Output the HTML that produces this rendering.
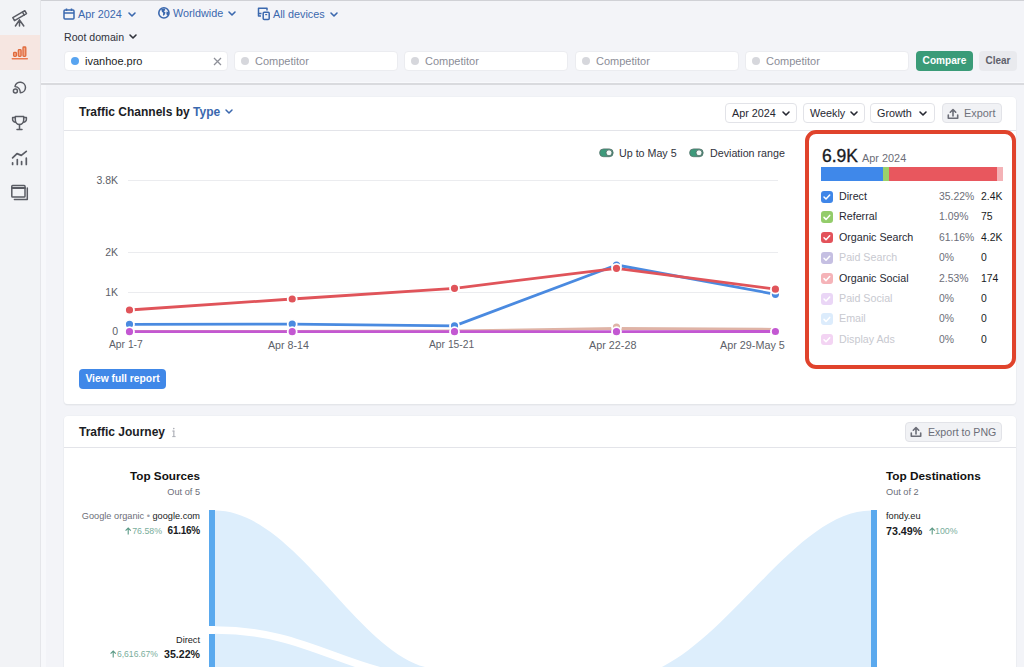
<!DOCTYPE html>
<html><head><meta charset="utf-8">
<style>
*{box-sizing:border-box;margin:0;padding:0}
html,body{width:1024px;height:667px;overflow:hidden}
body{background:#f3f4f8;font-family:"Liberation Sans",sans-serif;color:#1b1d25;position:relative}
.a{position:absolute;white-space:nowrap}
svg{position:absolute;overflow:visible}
#topline{left:0;top:0;width:1024px;height:1.2px;background:#d0d1d6}
#side{left:0;top:0;width:41px;height:667px;background:#f2f3f6;border-right:1px solid #e5e6ea}
#side .act{position:absolute;left:0;top:35px;width:40px;height:35px;background:#f6e6e1}
#hdrline{left:41px;top:83.3px;width:983px;height:2.2px;background:#d9dade;box-shadow:0 -1px 0 #f8f9fc}
.blue{color:#3b68ae}
.hd{font-size:10.8px;top:7px;line-height:14px}
.inp{top:51px;height:20px;width:164px;background:#fff;border:1px solid #ebecf0;border-radius:4px}
.inp .dot{position:absolute;left:6px;top:4.6px;width:8.4px;height:8.4px;border-radius:50%;background:#d6d7dc}
.inp .t{position:absolute;left:20px;top:2px;font-size:11px;line-height:14px;color:#8b8d97}
.card{background:#fff;border-radius:4px;box-shadow:0 0 0 0.5px #eceef2,0 1px 1.5px rgba(20,22,30,0.12)}
.btn{top:103px;height:20px;border:1px solid #e2e3e8;border-radius:4px;background:#fff;font-size:10.8px;line-height:18px;color:#262832}
.lg{font-size:10.7px;line-height:13px;color:#30323b;margin-top:0.7px}
.yl{font-size:10.5px;line-height:12px;color:#5d5f69;text-align:right;width:40px}
.xl{font-size:10.8px;line-height:12px;color:#5d5f69}
.row{position:absolute;left:821px;height:12px}
.cb{position:absolute;left:0;top:0;width:11.5px;height:11.5px;border-radius:3px}
.cb svg{left:0;top:0}
.rn{position:absolute;left:18px;top:-1px;font-size:10.7px;line-height:13px;color:#262832;white-space:nowrap}
.rp{position:absolute;left:118px;top:-1px;font-size:10.4px;line-height:13px;color:#6c6e78;white-space:nowrap}
.rv{position:absolute;left:160px;top:-1px;font-size:10.4px;line-height:13px;color:#191b23;white-space:nowrap}
.dim .rn{color:#c8c9d0}
</style></head><body>
<div class="a" id="topline"></div>
<div class="a" id="side"><div class="act"></div></div>
<div class="a" id="hdrline"></div>
<div class="a" style="left:41px;top:85px;width:5px;height:582px;background:#f7f8fb"></div>

<!-- sidebar icons -->
<svg width="41" height="210" style="left:0;top:0" fill="none" stroke="#5a5c64" stroke-width="1.5" stroke-linecap="round" stroke-linejoin="round">
  <path d="M12.8 17.6 L24.8 10.7 L26.5 13.7 L14.5 20.6 Z"/>
  <path d="M22.5 12.1 L24.2 15.1"/>
  <path d="M19.5 20 L15.4 26 M19.5 20 L19.5 26 M19.5 20 L23.8 26"/>
  <g stroke="#e06a3c" stroke-width="1.3" fill="#f2a888">
    <rect x="13.6" y="52.4" width="2.8" height="3.9" rx="0.8"/>
    <rect x="18.3" y="49.6" width="2.8" height="6.7" rx="0.8"/>
    <rect x="23.0" y="47.0" width="2.8" height="9.3" rx="0.8"/>
    <path d="M12.3 58.7 H27.3" stroke="#ea7a50" stroke-width="1.5"/>
  </g>
  <circle cx="15.4" cy="91.1" r="2"/>
  <path d="M15 86.4 A5.3 5.3 0 1 1 20.3 92.8 A6.2 6.2 0 0 0 15 86.4 Z"/>
  <path d="M15.3 116.6 H23.7 V120 A4.2 4.4 0 0 1 15.3 120 Z"/>
  <path d="M15.2 117.6 H12.6 V119 A3 3 0 0 0 15.6 122.3 M23.8 117.6 H26.4 V119 A3 3 0 0 1 23.4 122.3"/>
  <path d="M19.5 124.6 V129.3 M17 129.5 H22"/>
  <path d="M12.6 157.8 L17 153.6 L21.3 155.4 L26.3 151.3" stroke-width="1.7"/>
  <path d="M12.6 162.8 V164.4 M17.3 159.6 V164.4 M21.6 161.6 V164.4 M26.3 158.2 V164.4" stroke-width="1.7"/>
  <rect x="11.8" y="185.4" width="13.2" height="11.6" rx="0.8"/>
  <path d="M12 187.9 H25" stroke-width="2"/>
  <path d="M14.4 199.4 H27.3 V188"/>
</svg>

<!-- header selectors -->
<svg width="12" height="12" style="left:63px;top:8px" fill="none" stroke="#3b68ae" stroke-width="1.5"><rect x="1" y="2" width="10" height="9" rx="1"/><path d="M1 5 H11 M3.5 0.5 V3 M8.5 0.5 V3"/></svg>
<div class="a hd blue" style="left:78px">Apr 2024</div>
<svg width="8" height="6" style="left:128px;top:12px" fill="none" stroke="#3b68ae" stroke-width="1.6" stroke-linecap="round" stroke-linejoin="round"><path d="M1 1 L4 4 L7 1"/></svg>

<svg width="14" height="14" style="left:157px;top:6px"><circle cx="6.9" cy="6.9" r="5.1" fill="none" stroke="#3b68ae" stroke-width="1.6"/><path d="M4.2 3 L7.6 2.6 L8.4 3.9 L6.9 5.2 L8.6 6.5 L7.8 8.4 L6.5 10 L5.9 8.2 L6.3 6.9 L4.9 5.8 Z" fill="#3b68ae"/><path d="M9.6 5.6 L11.8 6.2 L11.5 8.6 L10 9.6 L9.3 7.6 Z" fill="#3b68ae"/></svg>
<div class="a hd blue" style="left:173px;top:6px">Worldwide</div>
<svg width="8" height="6" style="left:228px;top:11px" fill="none" stroke="#3b68ae" stroke-width="1.6" stroke-linecap="round" stroke-linejoin="round"><path d="M1 1 L4 4 L7 1"/></svg>

<svg width="14" height="14" style="left:257px;top:7px" fill="none" stroke="#3b68ae" stroke-width="1.5" stroke-linejoin="round"><path d="M4.5 6.5 H1.5 V1.2 H10 V3.5"/><path d="M1.5 6.5 V9 H4"/><rect x="6.2" y="5.2" width="6" height="7.2" rx="1"/><path d="M8.2 7.6 H10.2" stroke-width="1.2"/></svg>
<div class="a hd blue" style="left:273px">All devices</div>
<svg width="8" height="6" style="left:330px;top:12px" fill="none" stroke="#3b68ae" stroke-width="1.6" stroke-linecap="round" stroke-linejoin="round"><path d="M1 1 L4 4 L7 1"/></svg>

<div class="a hd" style="left:64px;top:30px;color:#30323b;font-size:10.6px">Root domain</div>
<svg width="8" height="6" style="left:129px;top:34px" fill="none" stroke="#30323b" stroke-width="1.6" stroke-linecap="round" stroke-linejoin="round"><path d="M1 1 L4 4 L7 1"/></svg>

<div class="a inp" style="left:64px"><div class="dot" style="background:#58a4f0"></div><div class="t" style="color:#1b1d25">ivanhoe.pro</div>
  <svg width="10" height="10" style="left:148px;top:5px" fill="none" stroke="#8e9099" stroke-width="1.3"><path d="M1 1 L8 8 M8 1 L1 8"/></svg></div>
<div class="a inp" style="left:234px"><div class="dot"></div><div class="t">Competitor</div></div>
<div class="a inp" style="left:404px"><div class="dot"></div><div class="t">Competitor</div></div>
<div class="a inp" style="left:575px"><div class="dot"></div><div class="t">Competitor</div></div>
<div class="a inp" style="left:745px"><div class="dot"></div><div class="t">Competitor</div></div>
<div class="a" style="left:916px;top:51px;width:57px;height:20px;background:#3a9b78;border-radius:4px;color:#fff;font-size:10.1px;font-weight:bold;line-height:20px;text-align:center">Compare</div>
<div class="a" style="left:979px;top:51px;width:38px;height:20px;background:#e9eaee;border-radius:4px;color:#5f616b;font-size:10px;font-weight:bold;line-height:20px;text-align:center">Clear</div>

<!-- card 1 -->
<div class="a card" style="left:64px;top:97px;width:952px;height:307px"></div>
<div class="a" style="left:64px;top:130px;width:952px;height:1px;background:#e3e4e9"></div>
<div class="a" style="left:79px;top:104px;font-size:12px;font-weight:bold;line-height:16px">Traffic Channels by <span class="blue">Type</span></div>
<svg width="8" height="6" style="left:225px;top:109px" fill="none" stroke="#3b68ae" stroke-width="1.5" stroke-linecap="round" stroke-linejoin="round"><path d="M1 1 L4 4 L7 1"/></svg>

<div class="a btn" style="left:725px;width:72px;padding-left:6px">Apr 2024</div>
<svg width="8" height="6" style="left:782px;top:111px" fill="none" stroke="#262832" stroke-width="1.6" stroke-linecap="round" stroke-linejoin="round"><path d="M1 1 L4 4 L7 1"/></svg>
<div class="a btn" style="left:803px;width:62px;padding-left:6px">Weekly</div>
<svg width="8" height="6" style="left:850px;top:111px" fill="none" stroke="#262832" stroke-width="1.6" stroke-linecap="round" stroke-linejoin="round"><path d="M1 1 L4 4 L7 1"/></svg>
<div class="a btn" style="left:870px;width:65px;padding-left:6px">Growth</div>
<svg width="8" height="6" style="left:919px;top:111px" fill="none" stroke="#262832" stroke-width="1.6" stroke-linecap="round" stroke-linejoin="round"><path d="M1 1 L4 4 L7 1"/></svg>
<div class="a btn" style="left:942px;width:60px;padding-left:21px;background:#f1f2f5;color:#70727c;font-size:10.9px">Export</div>
<svg width="12" height="12" style="left:946.5px;top:107.5px" fill="none" stroke="#6c6e78" stroke-width="1.6" stroke-linecap="round" stroke-linejoin="round"><path d="M6 8 V1.8 M3.3 4.2 L6 1.5 L8.7 4.2 M1.3 7 V10.2 H10.7 V7"/></svg>

<!-- toggles -->
<svg width="16" height="10" style="left:598.7px;top:148px"><rect x="0.6" y="0.9" width="13.6" height="7.8" rx="3.9" fill="#3d9a7b" stroke="#56706a" stroke-width="0.8"/><circle cx="10" cy="4.8" r="3" fill="#f2fbf8" stroke="#56706a" stroke-width="0.9"/></svg>
<div class="a lg" style="left:619px;top:146px">Up to May 5</div>
<svg width="16" height="10" style="left:689px;top:148px"><rect x="0.6" y="0.9" width="13.6" height="7.8" rx="3.9" fill="#3d9a7b" stroke="#56706a" stroke-width="0.8"/><circle cx="10" cy="4.8" r="3" fill="#f2fbf8" stroke="#56706a" stroke-width="0.9"/></svg>
<div class="a lg" style="left:710px;top:146px">Deviation range</div>

<!-- chart -->
<svg width="1024" height="400" style="left:0;top:0">
  <g stroke="#ebecef" stroke-width="1">
    <path d="M128 180.5 H778 M128 252.5 H778 M128 292.5 H778 M128 331.5 H778"/>
  </g>
  <g fill="none" stroke-width="2.8" stroke-linejoin="round">
    <polyline stroke="#4a8ae0" points="129.5,324.3 292.2,324.1 454.5,325.9 616.5,265 775.4,294.3"/>
    <polyline stroke="#e0545a" points="129.5,310 292.2,299 454.5,288.3 616.5,268.3 775.4,289.2"/>
    <polyline stroke="#dfb3a6" points="129.5,331.5 292.2,331.5 454.5,331 616.5,328.3 775.4,329.3"/>
    <polyline stroke="#c358d2" points="129.5,331.7 292.2,331.7 454.5,331.7 616.5,331.7 775.4,331.5"/>
  </g>
  <g stroke="#fff" stroke-width="1.8">
    <g fill="#4a8ae0"><circle cx="129.5" cy="324.3" r="4.5"/><circle cx="292.2" cy="324.1" r="4.5"/><circle cx="454.5" cy="325.9" r="4.5"/><circle cx="616.5" cy="265" r="4.5"/><circle cx="775.4" cy="294.3" r="4.5"/></g>
    <g fill="#e0545a"><circle cx="129.5" cy="310" r="4.5"/><circle cx="292.2" cy="299" r="4.5"/><circle cx="454.5" cy="288.3" r="4.5"/><circle cx="616.5" cy="268.3" r="4.5"/><circle cx="775.4" cy="289.2" r="4.5"/></g>
    <g fill="#dfb3a6"><circle cx="616.5" cy="327" r="4.5"/></g>
    <g fill="#c358d2"><circle cx="129.5" cy="331.7" r="4.5"/><circle cx="292.2" cy="331.7" r="4.5"/><circle cx="454.5" cy="331.7" r="4.5"/><circle cx="616.5" cy="331.7" r="4.5"/><circle cx="775.4" cy="331.5" r="4.5"/></g>
  </g>
</svg>
<div class="a yl" style="left:78px;top:174px">3.8K</div>
<div class="a yl" style="left:78px;top:246px">2K</div>
<div class="a yl" style="left:78px;top:286px">1K</div>
<div class="a yl" style="left:78px;top:325px">0</div>
<div class="a xl" style="left:109px;top:339px;font-size:10.3px">Apr 1-7</div>
<div class="a xl" style="left:268px;top:339px;font-size:10.65px">Apr 8-14</div>
<div class="a xl" style="left:429px;top:339px;font-size:10.3px">Apr 15-21</div>
<div class="a xl" style="left:589px;top:339px">Apr 22-28</div>
<div class="a xl" style="left:720px;top:339px">Apr 29-May 5</div>

<div class="a" style="left:79px;top:368.5px;width:87px;height:20px;background:#4088e8;border-radius:4px;color:#fff;font-size:10.3px;font-weight:bold;line-height:20px;text-align:center">View full report</div>

<!-- legend box -->
<div class="a" style="left:822px;top:146px;font-size:17.5px;line-height:20px;color:#191b23;-webkit-text-stroke:0.35px #191b23">6.9K</div><div class="a" style="left:862px;top:152px;font-size:10.9px;line-height:13px;color:#6c6e78">Apr 2024</div>
<div class="a" style="left:821px;top:166.5px;width:182px;height:14px;display:flex">
  <div style="width:62px;background:#3f88ea"></div>
  <div style="width:6px;background:#9bd06a"></div>
  <div style="width:108px;background:#e8575e"></div>
  <div style="width:6px;background:#f4b2b6"></div>
</div>

<div class="row" style="top:191px"><div class="cb" style="background:#3f86e8"></div><div class="rn">Direct</div><div class="rp">35.22%</div><div class="rv">2.4K</div></div>
<div class="row" style="top:211.4px"><div class="cb" style="background:#93cc6a"></div><div class="rn">Referral</div><div class="rp">1.09%</div><div class="rv">75</div></div>
<div class="row" style="top:231.8px"><div class="cb" style="background:#e3525a"></div><div class="rn">Organic Search</div><div class="rp">61.16%</div><div class="rv">4.2K</div></div>
<div class="row dim" style="top:252.2px"><div class="cb" style="background:#c5bfe2"></div><div class="rn">Paid Search</div><div class="rp">0%</div><div class="rv">0</div></div>
<div class="row" style="top:272.6px"><div class="cb" style="background:#f5b3b8"></div><div class="rn">Organic Social</div><div class="rp">2.53%</div><div class="rv">174</div></div>
<div class="row dim" style="top:293px"><div class="cb" style="background:#ead6f6"></div><div class="rn">Paid Social</div><div class="rp">0%</div><div class="rv">0</div></div>
<div class="row dim" style="top:313.4px"><div class="cb" style="background:#dcecfc"></div><div class="rn">Email</div><div class="rp">0%</div><div class="rv">0</div></div>
<div class="row dim" style="top:333.8px"><div class="cb" style="background:#f3d4f3"></div><div class="rn">Display Ads</div><div class="rp">0%</div><div class="rv">0</div></div>
<svg width="12" height="170" style="left:821px;top:191px" fill="none" stroke="#fff" stroke-width="1.5" stroke-linecap="round" stroke-linejoin="round">
  <path d="M3 6 L5 8 L8.7 4"/>
  <path d="M3 6 L5 8 L8.7 4" transform="translate(0,20.4)"/>
  <path d="M3 6 L5 8 L8.7 4" transform="translate(0,40.8)"/>
  <path d="M3 6 L5 8 L8.7 4" transform="translate(0,61.2)"/>
  <path d="M3 6 L5 8 L8.7 4" transform="translate(0,81.6)"/>
  <path d="M3 6 L5 8 L8.7 4" transform="translate(0,102)"/>
  <path d="M3 6 L5 8 L8.7 4" transform="translate(0,122.4)"/>
  <path d="M3 6 L5 8 L8.7 4" transform="translate(0,142.8)"/>
</svg>

<!-- red highlight -->
<div class="a" style="left:805px;top:130px;width:211px;height:238.5px;border:4.2px solid #e0432c;border-radius:11px"></div>

<!-- card 2 -->
<div class="a card" style="left:64px;top:416px;width:952px;height:260px"></div>
<div class="a" style="left:64px;top:447px;width:952px;height:1px;background:#e3e4e9"></div>
<div class="a" style="left:79px;top:424px;font-size:12px;font-weight:bold;line-height:16px">Traffic Journey</div>
<svg width="6" height="12" style="left:171px;top:427px" fill="#a9abb3"><rect x="2.3" y="3.6" width="1.1" height="6.4"/><rect x="1.2" y="3.6" width="2.2" height="0.9"/><rect x="1.2" y="9.2" width="3.4" height="0.9"/><circle cx="2.8" cy="1.6" r="0.8"/></svg>

<div class="a" style="left:904.5px;top:421.5px;width:97px;height:20px;border:1px solid #e2e3e8;border-radius:4px;background:#f1f2f5;color:#6c6e78;font-size:10.6px;line-height:18px;padding-left:22.5px">Export to PNG</div>
<svg width="12" height="12" style="left:909.5px;top:426px" fill="none" stroke="#6c6e78" stroke-width="1.6" stroke-linecap="round" stroke-linejoin="round"><path d="M6 8 V1.8 M3.3 4.2 L6 1.5 L8.7 4.2 M1.3 7 V10.2 H10.7 V7"/></svg>

<!-- sankey -->
<svg width="1024" height="667" style="left:0;top:0">
  <path fill="#ddeefc" d="M215 510.5 C299 510.5 364 669 440 669 L440 680 L215 680 Z"/>
  <path fill="#ddeefc" d="M871 510.5 C787 510.5 712 678 620 678 L620 690 L871 690 Z"/>
  <path fill="none" stroke="#fff" stroke-width="7.5" d="M215 630 C315 630 350 680 450 680"/>
  <rect x="209" y="510" width="6" height="116" fill="#5aa9ee"/>
  <rect x="209" y="634" width="6" height="40" fill="#5aa9ee"/>
  <rect x="871" y="510" width="6" height="160" fill="#5aa9ee"/>
</svg>

<div class="a" style="left:100px;top:469px;width:100px;text-align:right;font-size:11.7px;font-weight:bold;line-height:14px;color:#111">Top Sources</div>
<div class="a" style="left:100px;top:486.5px;width:100px;text-align:right;font-size:9.2px;line-height:11px;color:#6c6e78">Out of 5</div>
<div class="a" style="left:0px;top:511px;width:200px;text-align:right;font-size:9.2px;line-height:11px;color:#6c6e78">Google organic <span style="color:#a0a2aa">•</span> <span style="color:#191b23">google.com</span></div>
<div class="a" style="left:0px;top:524.5px;width:200px;text-align:right;font-size:10px;line-height:12px;color:#191b23;font-weight:bold;letter-spacing:-0.25px">61.16%</div>
<div class="a" style="left:100px;top:525.5px;width:62px;text-align:right;font-size:8.8px;line-height:11px;color:#7aae9c">76.58%</div>
<svg width="8" height="9" style="left:125px;top:526.5px" fill="none" stroke="#5a9985" stroke-width="1.1"><path d="M3.2 7.5 V1 M0.6 3.6 L3.2 1 L5.8 3.6"/></svg>

<div class="a" style="left:0px;top:635px;width:200px;text-align:right;font-size:9.2px;line-height:11px;color:#191b23">Direct</div>
<div class="a" style="left:0px;top:648px;width:200px;text-align:right;font-size:10.6px;line-height:12px;color:#191b23;font-weight:bold">35.22%</div>
<div class="a" style="left:56px;top:649px;width:102px;text-align:right;font-size:8.6px;line-height:11px;color:#7aae9c">6,616.67%</div>
<svg width="8" height="9" style="left:110px;top:650px" fill="none" stroke="#5a9985" stroke-width="1.1"><path d="M3.2 7.5 V1 M0.6 3.6 L3.2 1 L5.8 3.6"/></svg>

<div class="a" style="left:886px;top:469px;font-size:11.8px;font-weight:bold;line-height:14px;color:#111">Top Destinations</div>
<div class="a" style="left:886px;top:486.5px;font-size:9.2px;line-height:11px;color:#6c6e78">Out of 2</div>
<div class="a" style="left:886px;top:511px;font-size:9.2px;line-height:11px;color:#191b23">fondy.eu</div>
<div class="a" style="left:886px;top:524.5px;font-size:10.7px;line-height:12px;color:#191b23;font-weight:bold">73.49%</div>
<svg width="8" height="9" style="left:929px;top:527px" fill="none" stroke="#5a9985" stroke-width="1.1"><path d="M3.2 7.5 V1 M0.6 3.6 L3.2 1 L5.8 3.6"/></svg>
<div class="a" style="left:935px;top:525.5px;font-size:8.8px;line-height:11px;color:#7aae9c">100%</div>

</body></html>
